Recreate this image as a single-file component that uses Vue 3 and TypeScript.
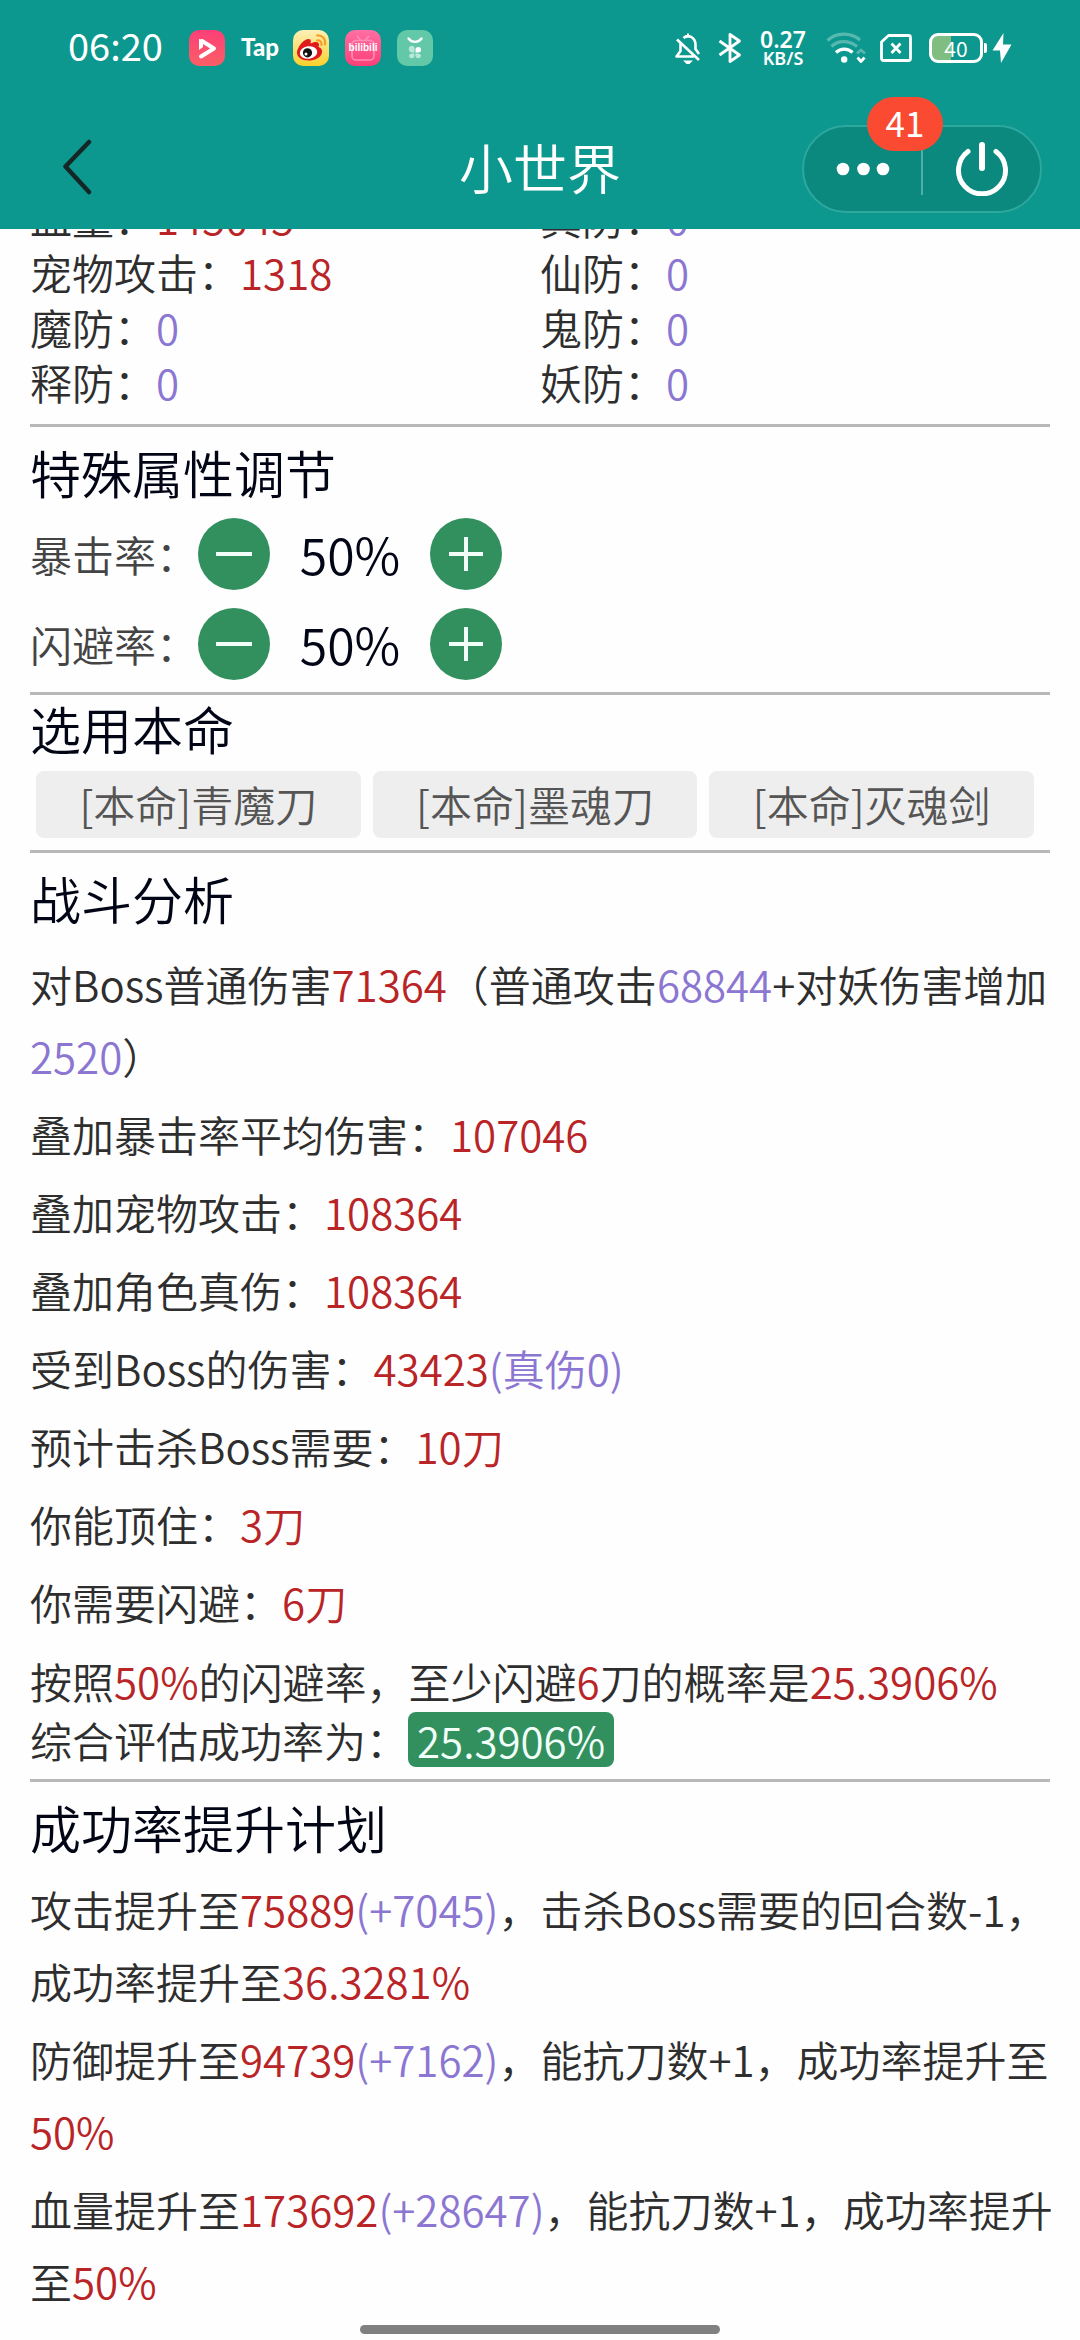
<script setup lang="ts">
import { ref } from 'vue'

type Tone = 'plain' | 'red' | 'violet'
interface Segment {
  text: string
  tone: Tone
}
interface Stat {
  label: string
  value: string
  tone: Tone
}

const plain = (text: string): Segment => ({ text, tone: 'plain' })
const red = (text: string): Segment => ({ text, tone: 'red' })
const violet = (text: string): Segment => ({ text, tone: 'violet' })

const stats: Stat[] = [
  { label: '血量', value: '145045', tone: 'red' },
  { label: '真防', value: '0', tone: 'violet' },
  { label: '宠物攻击', value: '1318', tone: 'red' },
  { label: '仙防', value: '0', tone: 'violet' },
  { label: '魔防', value: '0', tone: 'violet' },
  { label: '鬼防', value: '0', tone: 'violet' },
  { label: '释防', value: '0', tone: 'violet' },
  { label: '妖防', value: '0', tone: 'violet' },
]

const rates = ref([
  { label: '暴击率', value: 50 },
  { label: '闪避率', value: 50 },
])

const step = (index: number, delta: number): void => {
  const rate = rates.value[index]
  rate.value = Math.min(100, Math.max(0, rate.value + delta))
}

const weapons: string[] = ['[本命]青魔刀', '[本命]墨魂刀', '[本命]灭魂剑']

const analysis: Segment[][] = [
  [plain('对Boss普通伤害'), red('71364'), plain('（普通攻击'), violet('68844'), plain('+对妖伤害增加'), violet('2520'), plain('）')],
  [plain('叠加暴击率平均伤害：'), red('107046')],
  [plain('叠加宠物攻击：'), red('108364')],
  [plain('叠加角色真伤：'), red('108364')],
  [plain('受到Boss的伤害：'), red('43423'), violet('(真伤0)')],
  [plain('预计击杀Boss需要：'), red('10刀')],
  [plain('你能顶住：'), red('3刀')],
  [plain('你需要闪避：'), red('6刀')],
]

const odds: Segment[] = [
  plain('按照'), red('50%'), plain('的闪避率，至少闪避'), red('6'), plain('刀的概率是'), red('25.3906%'),
]

const plans: Segment[][] = [
  [plain('攻击提升至'), red('75889'), violet('(+7045)'), plain('，击杀Boss需要的回合数-1，'), plain('成功率提升至'), red('36.3281%')],
  [plain('防御提升至'), red('94739'), violet('(+7162)'), plain('，能抗刀数+1，'), plain('成功率提升至'), red('50%')],
  [plain('血量提升至'), red('173692'), violet('(+28647)'), plain('，能抗刀数+1，'), plain('成功率提升'), plain('至'), red('50%')],
]
</script>

<template>
  <div class="app">
    <header class="top">
      <div class="status">
        <span class="clock">06:20</span>
        <div class="notices">
          <svg class="notice" viewBox="0 0 36 36" aria-hidden="true">
            <defs>
              <linearGradient id="playBg" x1="0" y1="0" x2="0" y2="1">
                <stop offset="0" stop-color="#fc3f78" /><stop offset="1" stop-color="#fb5f66" />
              </linearGradient>
            </defs>
            <rect width="36" height="36" rx="10" fill="url(#playBg)" />
            <path d="M13 11L25 18.500L12 26.500" fill="none" stroke="#fff" stroke-width="4" stroke-linejoin="round" stroke-linecap="round" />
            <path d="M10 9V20L14 17V10Z" fill="#fff" />
          </svg>
          <span class="notice tap">Tap</span>
          <svg class="notice" viewBox="0 0 36 36" aria-hidden="true">
            <defs>
              <linearGradient id="eyeBg" x1="0" y1="0" x2="0" y2="1">
                <stop offset="0" stop-color="#fdf0b8" /><stop offset="1" stop-color="#fbd02c" />
              </linearGradient>
            </defs>
            <rect width="36" height="36" rx="10" fill="url(#eyeBg)" />
            <path d="M4 22C5 16 11 9 15.500 9c3 0 2.500 3 2 4.500C21 11.500 26 11 26 14.500c0 1-.5 2-.5 2.500C28 18 29.500 19.500 29 22.500 28 28 21.500 30.500 15.500 30.500 9 30.500 3.500 27 4 22Z" fill="#e0191f" />
            <ellipse cx="15.500" cy="22.500" rx="8.800" ry="6.300" fill="#fff" transform="rotate(-8 15.500 22.500)" />
            <circle cx="14.500" cy="22.800" r="4.600" fill="#111" />
            <circle cx="13" cy="24" r="1.500" fill="#fff" />
            <path d="M24 10.500c3-.5 5 1.500 4.500 4.500M24 5.500c5.500-.5 9 3.500 8 9" fill="none" stroke="#f4a02a" stroke-width="2.200" stroke-linecap="round" />
          </svg>
          <span class="notice tv">
            <svg viewBox="0 0 36 36" aria-hidden="true">
              <defs>
                <linearGradient id="tvBg" x1="0" y1="0" x2="0" y2="1">
                  <stop offset="0" stop-color="#ff6fa3" /><stop offset="1" stop-color="#fb3f78" />
                </linearGradient>
              </defs>
              <rect width="36" height="36" rx="10" fill="url(#tvBg)" />
              <path d="M12 6l4 4.500M24 6l-4 4.500M11 10.500H25a4 4 0 0 1 4 4V26a4 4 0 0 1-4 4H11a4 4 0 0 1-4-4V14.500a4 4 0 0 1 4-4Z" fill="none" stroke="#ff8fb6" stroke-width="1.600" />
            </svg>
            <span class="tv-word">bilibili</span>
          </span>
          <svg class="notice" viewBox="0 0 36 36" aria-hidden="true">
            <rect width="36" height="36" rx="10" fill="#62c8a8" />
            <path d="M11.500 8.500c3.500 4.500 9.500 4.500 13 0" fill="none" stroke="#fff" stroke-width="2.400" stroke-linecap="round" />
            <path d="M12 20a3 3 0 1 1 5.500 0v2.500H15A3 3 0 0 1 12 20ZM12 25.500a3 3 0 0 1 3-2h2.500v2.500a2.800 2.800 0 0 1-5.500 0ZM24 25.500a3 3 0 0 0-3-2h-2.500v2.500a2.800 2.800 0 0 0 5.500 0Z" fill="#b9e8d8" />
            <path d="M18.500 22.500V20a2.800 2.800 0 1 1 2.800 2.500Z" fill="#fff" />
          </svg>
        </div>
        <div class="signals">
          <svg class="bell" viewBox="0 0 26 32" aria-hidden="true">
            <path d="M8.500 7C13 3 20 6 20.500 13.500V18l3.500 5M5.500 12v8L1.500 25.500H19M2 8.500L24 29" fill="none" stroke="#fff" stroke-width="2.600" stroke-linejoin="round" transform="translate(0 -1)" />
            <path d="M13 1.500v4M10.500 29.500h5l-2.500 2.500Z" fill="#fff" stroke="#fff" stroke-width="2" />
          </svg>
          <svg class="bluetooth" viewBox="0 0 24 32" aria-hidden="true">
            <path d="M1.500 9L21.500 23L12 29.500V2.500L21.500 9L1.500 23" fill="none" stroke="#fff" stroke-width="2.800" stroke-linejoin="round" />
          </svg>
          <span class="speed"><span class="speed-value">0.27</span><span class="speed-unit">KB/S</span></span>
          <svg class="wifi" viewBox="0 0 40 32" aria-hidden="true">
            <path d="M1.500 8.500C10 0 25 0 34 8" fill="none" stroke="#57b8b0" stroke-width="3.200" />
            <path d="M5.500 14.500c6.500-6.500 17.500-6.500 25.500 0" fill="none" stroke="#57b8b0" stroke-width="3.200" />
            <path d="M10 20.500c4.500-4.500 12-4.500 16.500 0" fill="none" stroke="#fff" stroke-width="3.200" />
            <circle cx="18.200" cy="27.500" r="3.200" fill="#fff" />
            <path d="M31 21.500l4-3.500 4 3.500" fill="none" stroke="#57b8b0" stroke-width="2.600" />
            <path d="M31.500 25.500l3.500 4 3.500-4" fill="none" stroke="#fff" stroke-width="2.800" stroke-linejoin="round" />
          </svg>
          <svg class="sim" viewBox="0 0 32 28" aria-hidden="true">
            <path d="M8.500 1.500H28.500a2 2 0 0 1 2 2V24.500a2 2 0 0 1-2 2H3.500a2 2 0 0 1-2-2V8Z" fill="none" stroke="#fff" stroke-width="2.800" stroke-linejoin="round" />
            <path d="M11.500 9.500l9 9.500M20.500 9.500l-9 9.500" stroke="#fff" stroke-width="2.800" />
          </svg>
          <span class="battery"><span class="battery-level">40</span></span>
          <svg class="bolt" viewBox="0 0 20 32" aria-hidden="true">
            <path d="M11.500 1L0.500 18.500H8L9 31L19.500 12.500H11Z" fill="#fff" />
          </svg>
        </div>
      </div>

      <nav class="nav">
        <button class="back" type="button" aria-label="返回">
          <svg viewBox="0 0 30 56" aria-hidden="true">
            <path d="M27 3L3.500 27.500L27 53" fill="none" stroke="#142726" stroke-width="4.500" stroke-linecap="round" stroke-linejoin="round" />
          </svg>
        </button>
        <h1 class="title">小世界</h1>
        <div class="capsule">
          <button class="half" type="button" aria-label="更多">
            <svg viewBox="0 0 54 14" class="dots" aria-hidden="true">
              <circle cx="7" cy="7" r="6.300" fill="#fff" />
              <circle cx="27.500" cy="7" r="6.300" fill="#fff" />
              <circle cx="47" cy="7" r="6.300" fill="#fff" />
            </svg>
          </button>
          <span class="split"></span>
          <button class="half" type="button" aria-label="退出">
            <svg viewBox="0 0 54 54" class="power" aria-hidden="true">
              <path d="M13 9.500A23.500 23.500 0 1 0 41 9.500" fill="none" stroke="#fff" stroke-width="5" stroke-linecap="round" />
              <path d="M27 3V26" stroke="#fff" stroke-width="6" stroke-linecap="round" />
            </svg>
          </button>
          <span class="badge">41</span>
        </div>
      </nav>
    </header>

    <main class="content">
      <section>
        <dl class="stats">
          <div v-for="stat in stats" :key="stat.label" class="stat">
            <dt>{{ stat.label }}：</dt>
            <dd :class="stat.tone">{{ stat.value }}</dd>
          </div>
        </dl>
      </section>

      <section>
        <h2 class="spaced">特殊属性调节</h2>
        <div class="rates">
          <div v-for="(rate, index) in rates" :key="rate.label" class="rate">
            <span class="rate-label">{{ rate.label }}：</span>
            <button class="round" type="button" :aria-label="rate.label + '减少'" @click="step(index, -1)">
              <svg viewBox="0 0 36 36" aria-hidden="true"><path d="M0 18H36" stroke="#f2fff9" stroke-width="4" /></svg>
            </button>
            <output class="rate-value">{{ rate.value }}%</output>
            <button class="round" type="button" :aria-label="rate.label + '增加'" @click="step(index, 1)">
              <svg viewBox="0 0 36 36" aria-hidden="true"><path d="M1 18H35M18 1V35" stroke="#f2fff9" stroke-width="4" /></svg>
            </button>
          </div>
        </div>
      </section>

      <section>
        <h2>选用本命</h2>
        <div class="weapons">
          <button v-for="weapon in weapons" :key="weapon" class="weapon" type="button">{{ weapon }}</button>
        </div>
      </section>

      <section>
        <h2 class="spaced">战斗分析</h2>
        <div class="lines analysis">
          <p v-for="(line, index) in analysis" :key="index">
            <span v-for="(part, i) in line" :key="i" :class="part.tone">{{ part.text }}</span>
          </p>
        </div>
        <div class="summary">
          <p><span v-for="(part, i) in odds" :key="i" :class="part.tone">{{ part.text }}</span></p>
          <p class="result">综合评估成功率为：<strong class="chance">25.3906%</strong></p>
        </div>
      </section>

      <section>
        <h2 class="spaced">成功率提升计划</h2>
        <div class="lines">
          <p v-for="(line, index) in plans" :key="index">
            <span v-for="(part, i) in line" :key="i" :class="part.tone">{{ part.text }}</span>
          </p>
        </div>
      </section>
    </main>

    <div class="home-bar"></div>
  </div>
</template>

<style>
body {
  background: #fefefe;
}
</style>

<style scoped>
.app {
  font-family: "Noto Sans CJK SC", sans-serif;
  font-size: 42px;
  font-weight: 350;
  color: #2e2e2e;
}

button {
  padding: 0;
  border: 0;
  background: none;
  font: inherit;
  color: inherit;
  cursor: pointer;
}

svg {
  display: block;
}

h1,
h2,
p,
dl,
dd {
  margin: 0;
  font-weight: inherit;
}

/* Status bar and navigation */
.top {
  position: sticky;
  top: 0;
  z-index: 2;
  background: #0c988e;
  color: #fff;
}

.status {
  display: flex;
  align-items: center;
  height: 96px;
  padding: 0 68px;
}

.clock {
  width: 121px;
  padding-bottom: 8px;
  font-size: 38px;
  font-weight: 400;
}

.notices {
  display: flex;
  gap: 16px;
}

.notice {
  width: 36px;
  height: 36px;
}

.tap {
  font-family: Lato, sans-serif;
  font-size: 24px;
  font-weight: 900;
  line-height: 34px;
  text-align: center;
}

.tv {
  position: relative;
}

.tv-word {
  position: absolute;
  inset: 0;
  font-family: "Liberation Sans", sans-serif;
  font-size: 10px;
  font-weight: 700;
  line-height: 36px;
  text-align: center;
}

.signals {
  display: flex;
  align-items: center;
  margin-left: auto;
}

.bell {
  width: 26px;
  height: 32px;
}

.bluetooth {
  width: 24px;
  height: 32px;
  margin-left: 17px;
}

.speed {
  display: flex;
  flex-direction: column;
  align-items: center;
  width: 54px;
  margin: 0 16px 0 14px;
  font-family: "Noto Sans", sans-serif;
  font-weight: 600;
}

.speed-value {
  font-size: 23px;
  line-height: 20px;
}

.speed-unit {
  font-size: 18px;
  line-height: 18px;
}

.wifi {
  width: 40px;
  height: 32px;
}

.sim {
  width: 32px;
  height: 28px;
  margin: 0 17px 0 14px;
}

.battery {
  position: relative;
  box-sizing: border-box;
  width: 54px;
  height: 30px;
  border: 3px solid #fff;
  border-radius: 9px;
  background: linear-gradient(to right, #7fbd80 40%, transparent 40%);
}

.battery::after {
  content: "";
  position: absolute;
  top: 7px;
  right: -7px;
  width: 3px;
  height: 10px;
  border-radius: 0 2px 2px 0;
  background: #fff;
}

.battery-level {
  display: block;
  font-size: 21px;
  font-weight: 400;
  line-height: 24px;
  text-align: center;
}

.bolt {
  width: 20px;
  height: 32px;
  margin-left: 9px;
}

.nav {
  display: grid;
  grid-template-columns: 240px 1fr 240px;
  align-items: center;
  box-sizing: border-box;
  height: 133px;
  padding: 8px 38px 0;
}

.back {
  justify-self: start;
  padding: 10px 24px;
}

.back svg {
  width: 30px;
  height: 56px;
}

.title {
  font-size: 54px;
  line-height: 72px;
  text-align: center;
}

.capsule {
  position: relative;
  display: flex;
  align-items: center;
  box-sizing: border-box;
  height: 88px;
  margin-top: 4px;
  border: 2px solid #2ea79d;
  border-radius: 44px;
  background: #0b897f;
}

.half {
  display: flex;
  flex: 1;
  align-items: center;
  justify-content: center;
  height: 84px;
}

.split {
  width: 2px;
  height: 52px;
  background: #4fb0a8;
}

.dots {
  width: 54px;
  height: 14px;
}

.power {
  width: 54px;
  height: 54px;
}

.badge {
  position: absolute;
  top: -30px;
  left: 63px;
  width: 76px;
  height: 54px;
  border-radius: 27px;
  background: #fa4b32;
  font-size: 35px;
  font-weight: 400;
  line-height: 50px;
  text-align: center;
}

/* Page body, scrolled slightly under the header */
.content {
  margin-top: -40px;
  padding: 0 30px 60px;
}

section {
  padding-bottom: 12px;
  border-bottom: 3px solid #b8b8b8;
}

section:last-child {
  border-bottom: 0;
}

h2 {
  padding-bottom: 10px;
  font-size: 51px;
  line-height: 66px;
  color: #020516;
}

.spaced {
  padding-top: 12px;
}

.red {
  color: #b92427;
}

.violet {
  color: #8b76d2;
}

.stats {
  display: grid;
  grid-template-columns: 1fr 1fr;
  padding-bottom: 3px;
}

.stat {
  display: flex;
  line-height: 55px;
}

.rates {
  display: flex;
  flex-direction: column;
  gap: 18px;
  padding-top: 3px;
}

.rate {
  display: flex;
  align-items: center;
}

.rate-label {
  width: 168px;
  line-height: 72px;
  color: #444;
}

.round {
  display: flex;
  align-items: center;
  justify-content: center;
  width: 72px;
  height: 72px;
  border-radius: 50%;
  background: #32905f;
}

.round svg {
  width: 36px;
  height: 36px;
}

.rate-value {
  width: 160px;
  padding-bottom: 2px;
  font-size: 50px;
  line-height: 70px;
  text-align: center;
  color: #020516;
}

.weapons {
  display: grid;
  grid-template-columns: repeat(3, 1fr);
  gap: 12px;
  padding: 0 16px 0 6px;
}

.weapon {
  height: 67px;
  padding-bottom: 2px;
  border-radius: 8px;
  background: #eee;
  line-height: 64px;
  color: #555;
}

.lines {
  display: flex;
  flex-direction: column;
  gap: 6px;
  margin-right: -20px;
  padding-top: 3px;
  line-height: 72px;
}

.analysis {
  padding-top: 7px;
}

.summary {
  display: flex;
  flex-direction: column;
  gap: 4px;
  padding-top: 15px;
  line-height: 55px;
}

.result {
  display: flex;
}

.chance {
  padding: 0 9px;
  border-radius: 8px;
  background: #32905f;
  font-weight: inherit;
  color: #f2fff9;
}

.home-bar {
  position: fixed;
  bottom: 6px;
  left: 50%;
  width: 360px;
  height: 9px;
  margin-left: -180px;
  border-radius: 5px;
  background: #808080;
}
</style>
